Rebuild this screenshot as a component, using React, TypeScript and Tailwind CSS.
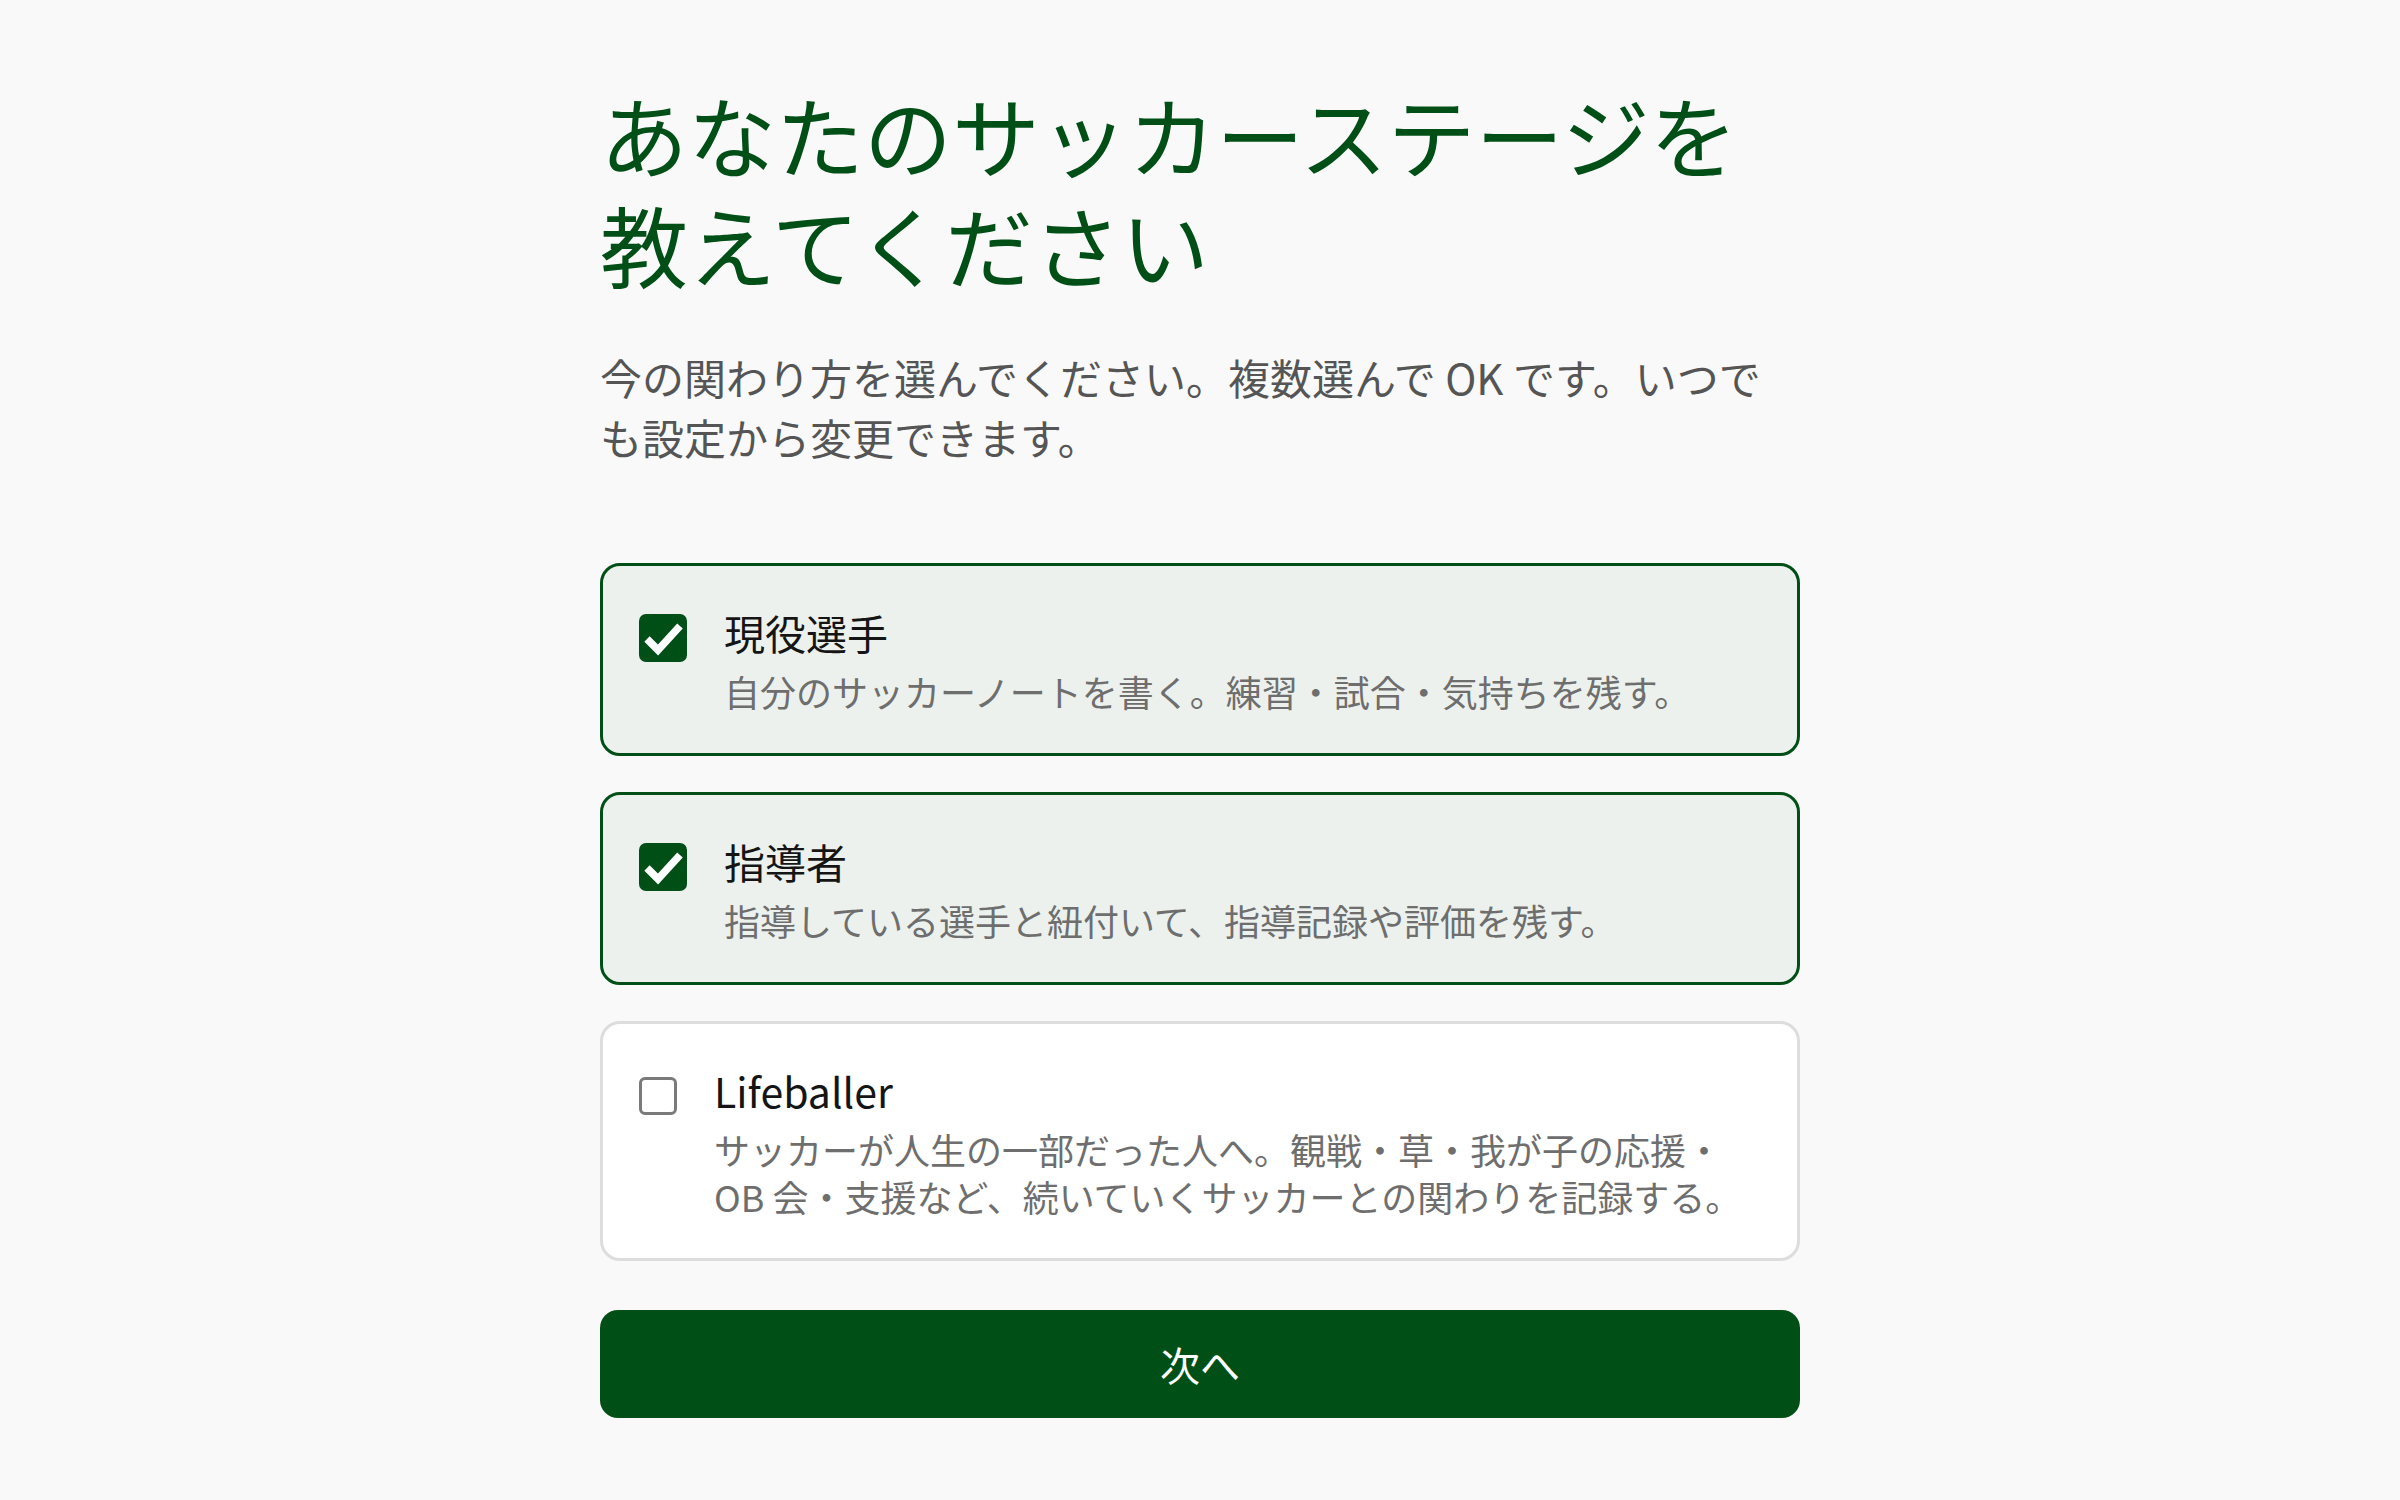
import { useState } from 'react'
import clsx from 'clsx'

type Stage = 'player' | 'coach' | 'lifeballer'

const stages: { id: Stage; label: string; lines: string[] }[] = [
  { id: 'player',     label: '現役選手',   lines: ['自分のサッカーノートを書く。練習・試合・気持ちを残す。'] },
  { id: 'coach',      label: '指導者',     lines: ['指導している選手と紐付いて、指導記録や評価を残す。'] },
  {
    id: 'lifeballer',
    label: 'Lifeballer',
    lines: [
      'サッカーが人生の一部だった人へ。観戦・草・我が子の応援・',
      'OB 会・支援など、続いていくサッカーとの関わりを記録する。',
    ],
  },
]

function CheckBox({ checked }: { checked: boolean }) {
  if (!checked) {
    return (
      <span className="mt-[15px] block w-[38px] h-[38px] shrink-0 rounded-[6px] border-[3px] border-[#7a7a7a] bg-white" />
    )
  }
  return (
    <span className="mt-[10px] flex items-center justify-center w-[48px] h-[48px] shrink-0 rounded-[7px] bg-[#004f17]">
      <svg viewBox="0 0 48 48" className="w-[48px] h-[48px]">
        <polyline points="8,25 19,36 41,12" fill="none" stroke="#fff" strokeWidth="7.5" />
      </svg>
    </span>
  )
}

export default function App() {
  const [selected, setSelected] = useState<Stage[]>(['player', 'coach'])

  const toggle = (id: Stage) =>
    setSelected(s => (s.includes(id) ? s.filter(x => x !== id) : [...s, id]))

  return (
    <div className="min-h-screen bg-[#f9f9f9] font-['Noto_Sans_CJK_JP','Noto_Sans',sans-serif]">
      <div className="mx-auto w-[1200px] pt-[78px] pb-[84px]">

        {/* Heading */}
        <h1 className="text-[88px] leading-[110px] font-normal text-[#004f17]">
          <span className="block">あなたのサッカーステージを</span>
          <span className="block">教えてください</span>
        </h1>
        <p className="mt-[49px] text-[42px] leading-[60px] text-[#555555]">
          今の関わり方を選んでください。複数選んで OK です。いつでも設定から変更できます。
        </p>

        {/* Options */}
        <div className="mt-[96px] flex flex-col gap-[36px]">
          {stages.map(stage => {
            const checked = selected.includes(stage.id)
            return (
              <button
                key={stage.id}
                type="button"
                onClick={() => toggle(stage.id)}
                className={clsx(
                  'flex items-start gap-[37px] w-full text-left rounded-[20px] border-[3px] px-[36px] py-[38px]',
                  checked ? 'border-[#004f17] bg-[#ecf1ed]' : 'border-[#dddddd] bg-white'
                )}
              >
                <CheckBox checked={checked} />
                <div className="min-w-0">
                  <div className="text-[41px] leading-[56px] text-[#151515]">{stage.label}</div>
                  <div className="mt-[8px] text-[36px] leading-[47px] text-[#6e6e6e]">
                    {stage.lines.map((line, i) => (
                      <div key={i}>{line}</div>
                    ))}
                  </div>
                </div>
              </button>
            )
          })}
        </div>

        {/* Next */}
        <button
          type="button"
          className="mt-[49px] w-full h-[108px] rounded-[18px] bg-[#004f17] text-white text-[40px]"
        >
          次へ
        </button>
      </div>
    </div>
  )
}
